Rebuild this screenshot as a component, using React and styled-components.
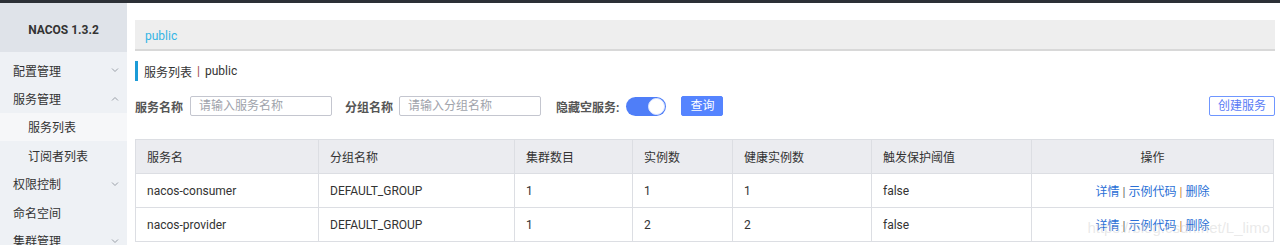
import React from "react";
import styled, { createGlobalStyle } from "styled-components";

const Global = createGlobalStyle`
  html, body { margin: 0; padding: 0; background: #fff; }
  body { font-family: Roboto, "Noto Sans CJK SC", "Noto Sans", sans-serif; font-size: 12px; color: #333; }
  #root { height: 245px; overflow: hidden; position: relative; }
`;

const TopBar = styled.div`
  height: 3px;
  background: #2c3036;
`;

const Layout = styled.div`
  display: flex;
  height: 242px;
`;

const Sidebar = styled.nav`
  width: 127px;
  flex: none;
  background: #eef1f5;
  display: flex;
  flex-direction: column;
  overflow: hidden;
`;

const Brand = styled.div`
  box-sizing: border-box;
  flex: none;
  height: 49px;
  padding-top: 4px;
  background: #dfe3e9;
  display: flex;
  align-items: center;
  justify-content: center;
  font-weight: bold;
  font-size: 12px;
  color: #333;
  margin-bottom: 4px;
`;

const MenuItem = styled.div`
  height: 28.4px;
  flex: none;
  display: flex;
  align-items: center;
  justify-content: space-between;
  padding: 0 8px 0 ${(p) => (p.$sub ? 28 : 13)}px;
  background: ${(p) => (p.$active ? "#f6f7f9" : "transparent")};
  color: #333;
  font-size: 12px;
`;

const Chevron = styled.svg`
  width: 8px;
  height: 8px;
  color: #9aa0a8;
`;

const Main = styled.main`
  flex: 1;
  padding: 17px 5px 0 8px;
  min-width: 0;
`;

const Crumb = styled.div`
  box-sizing: border-box;
  height: 31px;
  padding: 2px 0 0 10px;
  background: #eeeeee;
  border-bottom: 2px solid #d8d8d8;
  display: flex;
  align-items: center;
  color: #33b5e5;
  font-size: 12px;
`;

const Title = styled.div`
  margin-top: 10px;
  height: 20px;
  border-left: 3px solid #1b9bd7;
  padding-left: 6px;
  display: flex;
  align-items: center;
  font-size: 12px;
  color: #333;
`;

const Sep = styled.span`
  margin: 0 ${(p) => p.$m}px;
  color: ${(p) => p.$color || "#666"};
`;

const FormRow = styled.div`
  margin-top: 15px;
  height: 20px;
  display: flex;
  align-items: center;
`;

const Label = styled.span`
  font-weight: bold;
  color: #555;
  font-size: 12px;
  margin-right: ${(p) => p.$mr}px;
  white-space: nowrap;
`;

const Input = styled.input`
  box-sizing: border-box;
  width: 142px;
  height: 20px;
  border: 1px solid #c4c6cf;
  border-radius: 2px;
  padding: 0 8px;
  font: inherit;
  font-size: 12px;
  margin-right: ${(p) => p.$mr}px;
  outline: none;
  &::placeholder { color: #a0a3ab; }
`;

const Toggle = styled.div`
  width: 40px;
  height: 19px;
  border-radius: 10px;
  background: #4f7ef8;
  position: relative;
  margin-right: 15px;
  flex: none;
`;

const Knob = styled.div`
  position: absolute;
  right: 1px;
  top: 1px;
  width: 17px;
  height: 17px;
  border-radius: 50%;
  background: #fff;
  box-sizing: border-box;
  border: 1px solid #dbe5ff;
`;

const Button = styled.button`
  box-sizing: border-box;
  height: 20px;
  padding: 0 ${(p) => p.$px}px;
  border-radius: 2px;
  font: inherit;
  font-size: 12px;
  cursor: pointer;
  border: 1px solid ${(p) => (p.$primary ? "#5584ff" : "#6f96ff")};
  background: ${(p) => (p.$primary ? "#5584ff" : "#fff")};
  color: ${(p) => (p.$primary ? "#fff" : "#5b7cf5")};
  line-height: 18px;
`;

const Spacer = styled.div`
  flex: 1;
`;

const Table = styled.table`
  margin-top: 23px;
  width: 1138px;
  border-collapse: collapse;
  table-layout: fixed;
  font-size: 12px;
`;

const Th = styled.th`
  height: 34px;
  box-sizing: border-box;
  background: #ebecf0;
  border: 1px solid #dcdee3;
  font-weight: normal;
  color: #333;
  text-align: ${(p) => (p.$center ? "center" : "left")};
  padding: 0 11px;
`;

const Td = styled.td`
  height: 34px;
  box-sizing: border-box;
  border: 1px solid #dcdee3;
  color: #333;
  text-align: ${(p) => (p.$center ? "center" : "left")};
  padding: 0 11px;
  white-space: nowrap;
`;

const Link = styled.a`
  color: #2a6fd6;
  text-decoration: none;
`;

const Watermark = styled.div`
  position: absolute;
  right: 10px;
  bottom: 9px;
  font-family: "Liberation Sans", Arial, sans-serif;
  font-size: 15px;
  color: rgba(200, 200, 200, 0.4);
  pointer-events: none;
`;

const Down = () => (
  <Chevron viewBox="0 0 8 8">
    <path d="M1 2.5 L4 5.5 L7 2.5" fill="none" stroke="currentColor" strokeWidth="1" />
  </Chevron>
);
const Up = () => (
  <Chevron viewBox="0 0 8 8">
    <path d="M1 5.5 L4 2.5 L7 5.5" fill="none" stroke="currentColor" strokeWidth="1" />
  </Chevron>
);

const cols = [183, 196, 118, 100, 139, 160, 242];
const rows = [
  ["nacos-consumer", "DEFAULT_GROUP", "1", "1", "1", "false"],
  ["nacos-provider", "DEFAULT_GROUP", "1", "2", "2", "false"],
];

export default function App() {
  return (
    <>
      <Global />
      <TopBar />
      <Layout>
        <Sidebar>
          <Brand>NACOS 1.3.2</Brand>
          <MenuItem>配置管理<Down /></MenuItem>
          <MenuItem>服务管理<Up /></MenuItem>
          <MenuItem $sub $active>服务列表</MenuItem>
          <MenuItem $sub>订阅者列表</MenuItem>
          <MenuItem>权限控制<Down /></MenuItem>
          <MenuItem>命名空间</MenuItem>
          <MenuItem>集群管理<Down /></MenuItem>
        </Sidebar>
        <Main>
          <Crumb>public</Crumb>
          <Title>
            服务列表<Sep $m={5} $color="#a04848">|</Sep>public
          </Title>
          <FormRow>
            <Label $mr={7}>服务名称</Label>
            <Input $mr={13} placeholder="请输入服务名称" />
            <Label $mr={6}>分组名称</Label>
            <Input $mr={15} placeholder="请输入分组名称" />
            <Label $mr={7}>隐藏空服务:</Label>
            <Toggle><Knob /></Toggle>
            <Button $primary $px={8}>查询</Button>
            <Spacer />
            <Button $px={8}>创建服务</Button>
          </FormRow>
          <Table>
            <colgroup>
              {cols.map((w, i) => <col key={i} style={{ width: w }} />)}
            </colgroup>
            <thead>
              <tr>
                <Th>服务名</Th>
                <Th>分组名称</Th>
                <Th>集群数目</Th>
                <Th>实例数</Th>
                <Th>健康实例数</Th>
                <Th>触发保护阈值</Th>
                <Th $center>操作</Th>
              </tr>
            </thead>
            <tbody>
              {rows.map((r) => (
                <tr key={r[0]}>
                  {r.map((c, i) => <Td key={i}>{c}</Td>)}
                  <Td $center>
                    <Link>详情</Link><Sep $m={3}>|</Sep><Link>示例代码</Link><Sep $m={3} $color="#c98a3c">|</Sep><Link>删除</Link>
                  </Td>
                </tr>
              ))}
            </tbody>
          </Table>
        </Main>
      </Layout>
      <Watermark>https://blog.csdn.net/L_limo</Watermark>
    </>
  );
}
